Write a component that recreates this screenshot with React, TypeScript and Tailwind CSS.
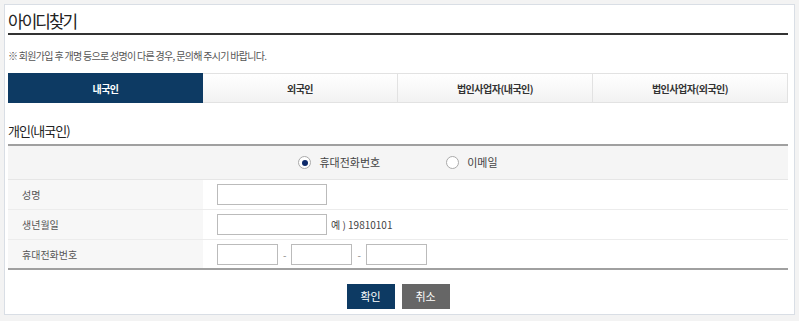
import { useState } from 'react';

const tabs = ['내국인', '외국인', '법인사업자(내국인)', '법인사업자(외국인)'];

const FindId = () => {
    const [activeTab, setActiveTab] = useState(0);
    const [method, setMethod] = useState<'phone' | 'email'>('phone');

    return (
        <div className="h-[321px] bg-[#f3f3f3] pt-[4px] px-[4px] font-['Noto_Sans_CJK_KR','Noto_Sans',sans-serif] text-[#333]">
            <div className="h-[311px] border border-[#d9dee5] bg-white pl-[3px] pr-[6px]">
                {/* title */}
                <div className="h-[30px] border-b-2 border-[#333] flex items-center">
                    <h1 className="text-[17px] leading-none tracking-[-2px] text-[#222] pt-[2px]">아이디찾기</h1>
                </div>

                <p className="mt-[14px] text-[10px] leading-[14px] text-[#555] tracking-[-0.7px]">
                    ※ 회원가입 후 개명 등으로 성명이 다른 경우, 문의해 주시기 바랍니다.
                </p>

                {/* tabs */}
                <div className="mt-[10px] grid grid-cols-4 h-[30px]">
                    {tabs.map((tab, i) => (
                        <button
                            key={tab}
                            onClick={() => setActiveTab(i)}
                            className={`text-[10px] font-bold tracking-[-0.5px] flex items-center justify-center ${
                                activeTab === i
                                    ? 'bg-[#0d3a63] text-white'
                                    : 'border-t border-r border-b border-[#e2e2e2] bg-gradient-to-b from-white to-[#f2f2f2] text-[#333]'
                            }`}
                        >
                            {tab}
                        </button>
                    ))}
                </div>

                <h2 className="mt-[19px] text-[13px] leading-[18px] tracking-[-1px] text-[#222]">개인(내국인)</h2>

                {/* form table */}
                <div className="mt-[4px] border-t-2 border-[#a0a0a0]">
                    <div className="h-[34px] bg-[#f5f5f5] border-b border-[#e6e6e6] flex items-center justify-center gap-[66px] text-[11px] text-[#444]">
                        <label className="flex items-center gap-[8px] cursor-pointer" onClick={() => setMethod('phone')}>
                            <span className="w-[13px] h-[13px] rounded-full border border-[#aaa] bg-white flex items-center justify-center">
                                {method === 'phone' && <span className="w-[6px] h-[6px] rounded-full bg-[#0d2a6b]" />}
                            </span>
                            휴대전화번호
                        </label>
                        <label className="flex items-center gap-[8px] cursor-pointer" onClick={() => setMethod('email')}>
                            <span className="w-[13px] h-[13px] rounded-full border border-[#aaa] bg-white flex items-center justify-center">
                                {method === 'email' && <span className="w-[6px] h-[6px] rounded-full bg-[#0d2a6b]" />}
                            </span>
                            이메일
                        </label>
                    </div>

                    <div className="flex h-[30px] border-b border-[#ececec]">
                        <div className="w-[195px] bg-[#f7f7f7] flex items-center pl-[14px] text-[10px] text-[#555]">성명</div>
                        <div className="flex items-center pl-[14px]">
                            <input className="w-[110px] h-[21px] border border-[#bbb] outline-none" />
                        </div>
                    </div>

                    <div className="flex h-[30px] border-b border-[#ececec]">
                        <div className="w-[195px] bg-[#f7f7f7] flex items-center pl-[14px] text-[10px] text-[#555]">생년월일</div>
                        <div className="flex items-center pl-[14px] gap-[4px] text-[10px] text-[#444]">
                            <input className="w-[110px] h-[21px] border border-[#bbb] outline-none" />
                            예 ) 19810101
                        </div>
                    </div>

                    <div className="flex h-[30px] border-b-2 border-[#a0a0a0]">
                        <div className="w-[195px] bg-[#f7f7f7] flex items-center pl-[14px] text-[10px] text-[#555]">휴대전화번호</div>
                        <div className="flex items-center pl-[14px] gap-[5px] text-[10px] text-[#888]">
                            <input className="w-[61px] h-[21px] border border-[#bbb] outline-none" />
                            -
                            <input className="w-[61px] h-[21px] border border-[#bbb] outline-none" />
                            -
                            <input className="w-[61px] h-[21px] border border-[#bbb] outline-none" />
                        </div>
                    </div>
                </div>

                {/* buttons */}
                <div className="mt-[14px] flex justify-center gap-[7px]">
                    <button className="w-[48px] h-[25px] bg-[#0d3a63] text-white text-[11px]">확인</button>
                    <button className="w-[48px] h-[25px] bg-[#666] text-white text-[11px]">취소</button>
                </div>
            </div>
        </div>
    );
};

export default FindId;
